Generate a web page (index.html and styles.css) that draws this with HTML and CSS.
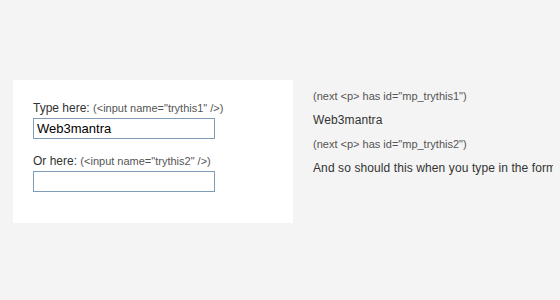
FILE: index.html
```html
<!DOCTYPE html>
<html>
<head>
<meta charset="utf-8">
<link rel="stylesheet" href="styles.css">
</head>
<body>
<div class="page">
  <div class="panel">
    <div class="field">
      <label class="label">Type here: <span class="hint">(&lt;input name="trythis1" /&gt;)</span></label>
      <input class="box" type="text" value="Web3mantra">
    </div>
    <div class="field">
      <label class="label">Or here: <span class="hint">(&lt;input name="trythis2" /&gt;)</span></label>
      <input class="box" type="text" value="">
    </div>
  </div>
  <div class="output">
    <p class="note">(next &lt;p&gt; has id="mp_trythis1")</p>
    <p class="echo">Web3mantra</p>
    <p class="note">(next &lt;p&gt; has id="mp_trythis2")</p>
    <p class="echo nowrap">And so should this when you type in the form</p>
  </div>
</div>
</body>
</html>
```

FILE: styles.css
```css
html, body {
  margin: 0;
  padding: 0;
  background: #f4f4f4;
  font-family: "Liberation Sans", Arial, sans-serif;
  color: #333;
  overflow: hidden;
}
.page {
  display: flex;
  align-items: flex-start;
  padding: 80px 0 0 13px;
  gap: 20px;
}
.panel {
  flex: none;
  width: 280px;
  height: 143px;
  box-sizing: border-box;
  background: #fff;
  padding: 21px 20px;
  display: flex;
  flex-direction: column;
  gap: 15px;
}
.field {
  display: flex;
  flex-direction: column;
  gap: 2px;
}
.label {
  font-size: 12px;
  line-height: 15px;
  color: #333;
}
.hint {
  font-size: 11px;
  color: #555;
}
.box {
  width: 182px;
  height: 21px;
  box-sizing: border-box;
  margin: 0;
  border: 1px solid #7f9db9;
  padding: 1px 3px;
  font-family: "Liberation Sans", Arial, sans-serif;
  font-size: 13px;
  color: #000;
  background: #fff;
  outline: none;
}
.output {
  flex: none;
  width: 240px;
  overflow: hidden;
  padding-top: 9px;
}
.note {
  margin: 0 0 10px;
  font-size: 11px;
  line-height: 14px;
  color: #555;
}
.echo {
  margin: 0 0 10px;
  font-size: 12px;
  line-height: 14px;
  letter-spacing: 0.1px;
  color: #333;
}
.nowrap {
  white-space: nowrap;
}
```
